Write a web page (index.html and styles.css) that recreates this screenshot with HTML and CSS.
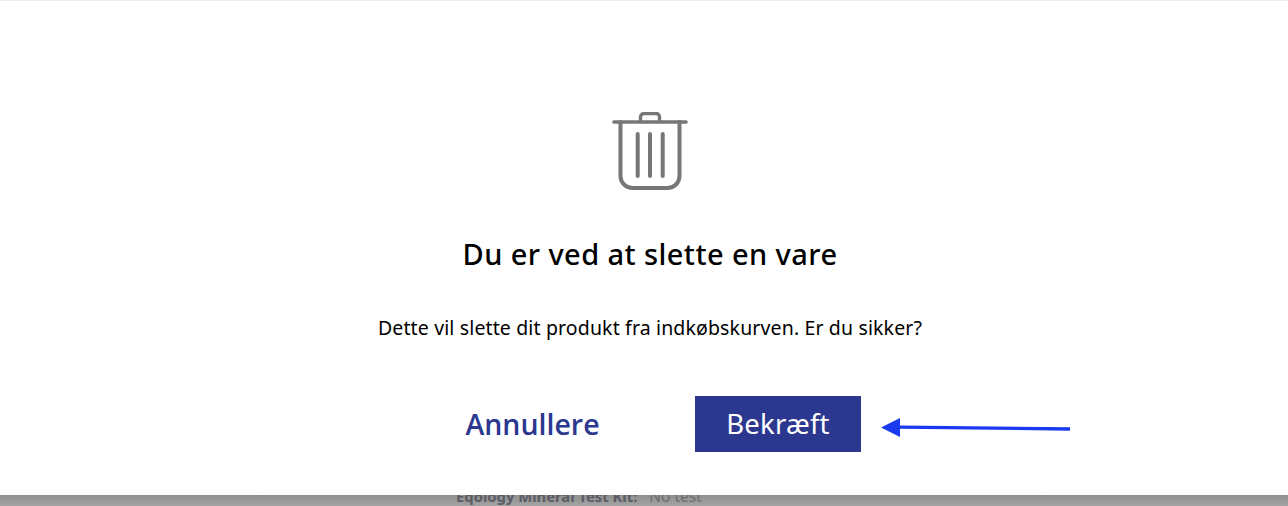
FILE: index.html
```html
<!DOCTYPE html>
<html lang="da">
<head>
<meta charset="utf-8">
<title>Slet vare</title>
<link rel="stylesheet" href="styles.css">
</head>
<body>
<div class="dialog">
  <svg class="trash" width="76" height="80" viewBox="0 0 76 80" fill="none" stroke="#777" stroke-linecap="round" stroke-linejoin="round">
    <path d="M2 10h72" stroke-width="3.600"/>
    <path d="M28.500 9V5a3.500 3.500 0 0 1 3.500-3.500h12a3.500 3.500 0 0 1 3.500 3.500v4" stroke-width="3.400"/>
    <path d="M8.500 10v54a12 12 0 0 0 12 12h35a12 12 0 0 0 12-12V10" stroke-width="4"/>
    <path d="M25.700 22v42M38 22v42M50.700 22v42" stroke-width="4"/>
  </svg>
  <h1 class="title">Du er ved at slette en vare</h1>
  <p class="message">Dette vil slette dit produkt fra indkøbskurven. Er du sikker?</p>
  <div class="actions">
    <button class="cancel" type="button">Annullere</button>
    <button class="confirm" type="button">Bekræft</button>
  </div>
  <svg class="arrow" width="192" height="22" viewBox="0 0 192 22">
    <path d="M20 10.100L190 12" stroke="#1a3aef" stroke-width="3.400" fill="none"/>
    <path d="M1 10.500L20 1v19z" fill="#1a3aef"/>
  </svg>
</div>
<div class="backdrop">
  <div class="behind">
    <div class="behind-text"><b>Eqology Mineral Test Kit:</b><span>No test</span></div>
  </div>
</div>
</body>
</html>
```
FILE: styles.css
```css
* { box-sizing: border-box; }
html, body { margin: 0; padding: 0; height: 506px; overflow: hidden; background: #fff; }
body { display: flex; flex-direction: column; font-family: "Noto Sans", sans-serif; color: #000; }
.dialog {
  position: relative;
  height: 495px;
  flex: none;
  border-top: 1px solid #eee;
  padding: 111px 0 0 12px;
  display: flex;
  flex-direction: column;
  align-items: center;
  background: #fff;
}
.trash { display: block; flex: none; }
.title {
  margin: 42px 0 0;
  font-size: 29px;
  line-height: 40px;
  font-weight: 500;
  letter-spacing: 0.42px;
}
.message {
  margin: 41px 0 0;
  font-size: 19.500px;
  line-height: 26px;
  font-weight: 400;
  letter-spacing: 0.14px;
}
.actions { display: flex; align-items: center; margin: 55px 0 0 26px; }
.cancel, .confirm { border: 0; padding: 0; }
.cancel {
  width: 135px;
  margin-right: 95px;
  background: none;
  color: #2c388f;
  font-family: "Open Sans", sans-serif;
  font-size: 28.500px;
  font-weight: 600;
  text-align: center;
  white-space: nowrap;
}
.confirm {
  width: 166px;
  height: 56px;
  padding-bottom: 2px;
  background: #2c388f;
  color: #fff;
  font-family: "Noto Sans", sans-serif;
  font-size: 27.500px;
  font-weight: 400;
  letter-spacing: 0.2px;
}
.arrow { position: absolute; left: 880px; top: 416px; }
.backdrop { flex: 1; overflow: hidden; background: linear-gradient(#909090, #a2a2a2); }
.behind { width: 782px; height: 11px; margin-left: 259px; border: solid #888; border-width: 0 1px; }
.behind-text {
  margin: -9px 0 0 196px;
  font-size: 14.800px;
  line-height: 20px;
  color: #5c5c66;
  white-space: nowrap;
}
.behind-text b { font-weight: 700; }
.behind-text span { margin-left: 12px; font-size: 15.500px; color: #6e6e6e; }
```
